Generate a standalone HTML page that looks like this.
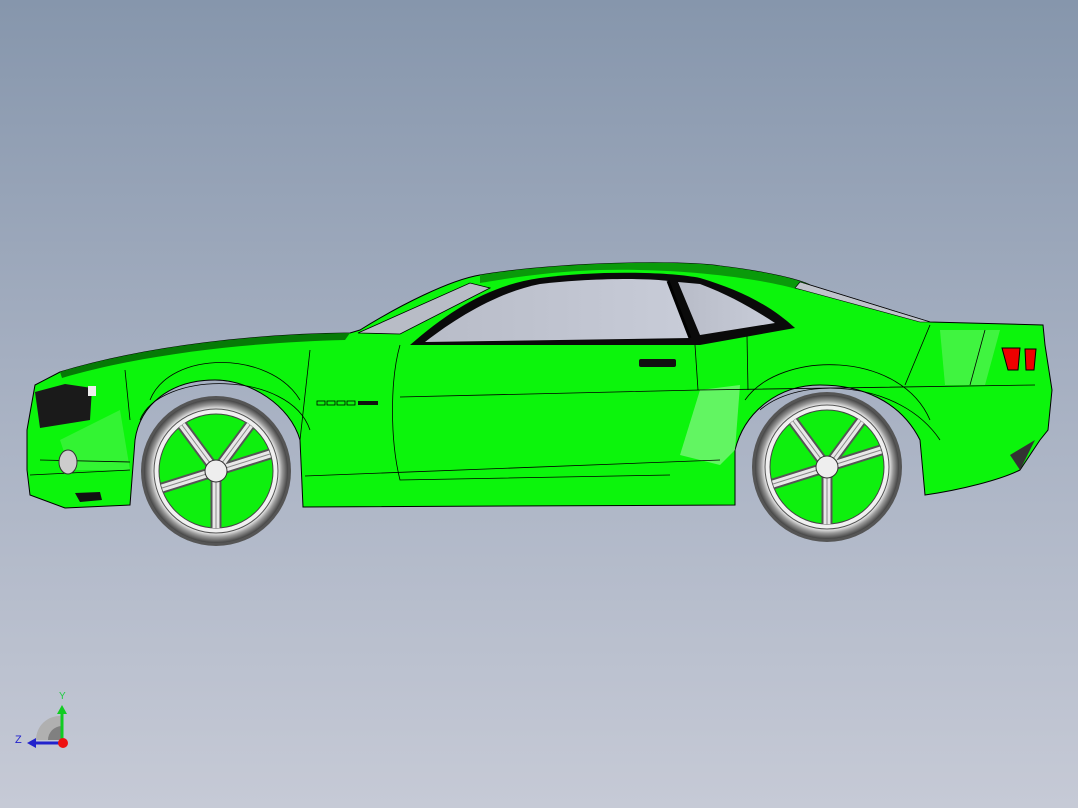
<!DOCTYPE html>
<html><head><style>
html,body{margin:0;padding:0;}
body{width:1078px;height:808px;overflow:hidden;background:linear-gradient(#8696ac 0%,#a5afc1 45%,#c6cad6 100%);font-family:"Liberation Sans",sans-serif;}
svg{position:absolute;left:0;top:0;}
</style></head><body>
<svg width="1078" height="808" viewBox="0 0 1078 808">
<defs>
<radialGradient id="tyre"><stop offset="0.85" stop-color="#ffffff"/><stop offset="0.92" stop-color="#999"/><stop offset="1" stop-color="#444"/></radialGradient>
<linearGradient id="glass" x1="0" y1="0" x2="1" y2="0"><stop offset="0" stop-color="#b8bcc8"/><stop offset="1" stop-color="#c8ccd8"/></linearGradient>
</defs>
<path d="M27,430 L35,385 L60,372 C150,345 260,334 350,333 L360,330 C400,305 450,280 480,275 C560,262 680,260 720,266 C770,272 800,280 810,285 L930,322 L1043,325 L1045,345 L1052,390 L1048,430 L1040,440 L1020,470 C1000,480 960,490 925,495 L920,440 C900,400 860,385 820,385 C780,385 745,410 735,450 L735,505 L303,507 L300,440 C290,405 250,380 215,380 C170,380 140,405 135,440 L130,505 L65,508 L30,495 L27,470 Z" fill="#0cf50c" stroke="#000" stroke-width="1"/>
<path d="M700,390 L740,385 L735,450 L720,465 L680,455 Z" fill="#9df59d" opacity="0.6"/>
<path d="M940,330 L1000,330 L985,385 L945,385 Z" fill="#8ff28f" opacity="0.4"/>
<path d="M60,440 L120,410 L130,470 L70,470 Z" fill="#8ff28f" opacity="0.3"/>
<path d="M60,372 C150,345 260,334 350,333 L345,340 C260,342 150,352 62,378Z" fill="#067a06"/>
<path d="M480,275 C560,262 680,260 720,266 C770,272 800,280 810,285 L800,290 C760,278 680,268 600,270 C540,272 500,280 480,283Z" fill="#0a9a0a"/>
<path d="M358,333 L470,283 L490,288 L400,334 Z" fill="#b8bcc6" stroke="#000" stroke-width="0.8"/>
<path d="M410,345 C450,310 490,285 540,278 C600,270 670,272 700,278 C740,290 770,305 795,328 L700,345 Z" fill="#0a0a0a"/>
<path d="M425,342 C460,315 500,292 540,284 C590,278 650,278 668,281 L690,338 Z" fill="url(#glass)"/>
<path d="M678,282 L700,284 C730,295 755,310 775,323 L700,335 Z" fill="url(#glass)"/>
<line x1="668" y1="281" x2="690" y2="338" stroke="#000" stroke-width="3"/>
<path d="M800,282 L930,322 L920,322 L795,288Z" fill="#c0c4cc" stroke="#000" stroke-width="0.6"/>
<g stroke="#000" stroke-width="0.8" fill="none">
<path d="M310,350 L300,440"/>
<path d="M400,345 C390,380 390,440 400,480 L670,475"/>
<path d="M305,476 L720,460"/>
<path d="M695,345 L698,390"/>
<path d="M747,336 L748,390"/>
<path d="M930,325 L905,385"/>
<path d="M985,330 L970,385"/>
<path d="M400,397 L700,390 L1035,385"/>
<path d="M150,400 C170,350 270,350 300,400"/>
<path d="M140,420 C160,370 290,370 310,430"/>
<path d="M745,400 C780,350 900,350 930,420"/>
<path d="M760,410 C800,375 900,380 940,440"/>
<path d="M125,370 L130,420"/>
<path d="M40,460 L130,462"/>
<path d="M30,475 L130,470"/>
</g>
<path d="M35,392 L65,384 L92,388 L90,420 L40,428 Z" fill="#1a1a1a"/>
<rect x="88" y="386" width="8" height="10" fill="#eee"/>
<ellipse cx="68" cy="462" rx="9" ry="12" fill="#ccc" stroke="#333"/>
<path d="M75,493 L100,492 L102,500 L80,502Z" fill="#111"/>
<rect x="639" y="359" width="37" height="8" rx="2" fill="#111"/>
<g fill="none" stroke="#000" stroke-width="0.8"><rect x="317" y="401" width="8" height="4"/><rect x="327" y="401" width="8" height="4"/><rect x="337" y="401" width="8" height="4"/><rect x="347" y="401" width="8" height="4"/></g>
<rect x="358" y="401" width="20" height="4" fill="#111"/>
<path d="M1002,348 L1020,348 L1018,370 L1008,370Z" fill="#e00" stroke="#000"/>
<path d="M1025,349 L1036,349 L1034,370 L1026,370Z" fill="#e00" stroke="#000"/>
<path d="M1010,455 L1035,440 L1020,470Z" fill="#333"/>
<g id="w">
<circle cx="216" cy="471" r="75" fill="#555"/>
<circle cx="216" cy="471" r="72" fill="url(#tyre)"/>
<circle cx="216" cy="471" r="62" fill="#f0f0f0" stroke="#555"/>
<circle cx="216" cy="471" r="57" fill="#0ef00e" stroke="#444"/>
<g stroke="#555" stroke-width="11">
<line x1="216" y1="471" x2="216" y2="528"/>
<line x1="216" y1="471" x2="270" y2="454"/>
<line x1="216" y1="471" x2="250" y2="425"/>
<line x1="216" y1="471" x2="182" y2="425"/>
<line x1="216" y1="471" x2="162" y2="488"/>
</g>
<g stroke="#e8e8e8" stroke-width="7">
<line x1="216" y1="471" x2="216" y2="528"/>
<line x1="216" y1="471" x2="270" y2="454"/>
<line x1="216" y1="471" x2="250" y2="425"/>
<line x1="216" y1="471" x2="182" y2="425"/>
<line x1="216" y1="471" x2="162" y2="488"/>
</g>
<g stroke="#888" stroke-width="1">
<line x1="216" y1="471" x2="216" y2="528"/>
<line x1="216" y1="471" x2="270" y2="454"/>
<line x1="216" y1="471" x2="250" y2="425"/>
<line x1="216" y1="471" x2="182" y2="425"/>
<line x1="216" y1="471" x2="162" y2="488"/>
</g>
<circle cx="216" cy="471" r="11" fill="#eee" stroke="#333"/>
</g>
<use href="#w" transform="translate(611,-4)"/>
<path d="M36,740 A24,24 0 0 1 62,716 L62,740Z" fill="#b0b0b0"/>
<path d="M48,740 A14,14 0 0 1 62,726 L62,740Z" fill="#808080"/>
<line x1="62" y1="742" x2="62" y2="712" stroke="#1c2" stroke-width="3"/>
<path d="M57,714 L62,705 L67,714Z" fill="#1c2"/>
<line x1="62" y1="743" x2="34" y2="743" stroke="#22c" stroke-width="3"/>
<path d="M36,738 L27,743 L36,748Z" fill="#22c"/>
<circle cx="63" cy="743" r="5" fill="#e11"/>
<text x="59" y="699" font-size="10" fill="#2c4">Y</text>
<text x="15" y="743" font-size="11" fill="#22c">Z</text>
</svg>
</body></html>
